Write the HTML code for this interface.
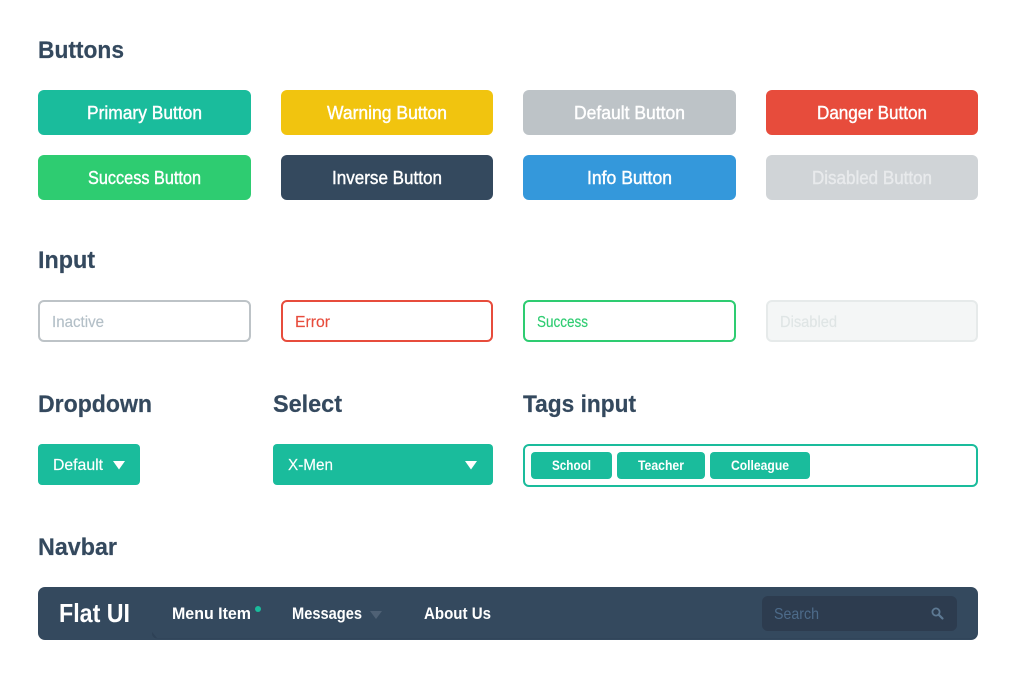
<!DOCTYPE html>
<html lang="en"><head><meta charset="utf-8"><title>Flat UI</title>
<style>
html,body{margin:0;padding:0;background:#fff;width:1017px;height:685px;overflow:hidden}
svg{display:block}
text{font-family:"Liberation Sans",sans-serif}
.h{font-size:24px;font-weight:700;fill:#34495e;stroke:#34495e;stroke-width:.2px}
.b{font-size:18px;fill:#fff;stroke:#fff;stroke-width:.4px}
.i{font-size:16px;stroke-width:.15px}
.t{font-size:14px;font-weight:700;fill:#fff}
.n{font-size:16.5px;font-weight:700;fill:#fff}
</style></head><body>
<svg width="1017" height="685" viewBox="0 0 1017 685" xmlns="http://www.w3.org/2000/svg">
<text class="h" x="38" y="58" textLength="86" lengthAdjust="spacingAndGlyphs">Buttons</text>
<rect x="38" y="90" width="213" height="45" rx="6" fill="#1abc9c"/>
<rect x="281" y="90" width="212" height="45" rx="6" fill="#f1c40f"/>
<rect x="523" y="90" width="213" height="45" rx="6" fill="#bdc3c7"/>
<rect x="766" y="90" width="212" height="45" rx="6" fill="#e74c3c"/>
<rect x="38" y="155" width="213" height="45" rx="6" fill="#2ecc71"/>
<rect x="281" y="155" width="212" height="45" rx="6" fill="#34495e"/>
<rect x="523" y="155" width="213" height="45" rx="6" fill="#3498db"/>
<rect x="766" y="155" width="212" height="45" rx="6" fill="#d0d4d7"/>
<text class="b" x="87" y="119" textLength="115" lengthAdjust="spacingAndGlyphs">Primary Button</text>
<text class="b" x="327" y="119" textLength="120" lengthAdjust="spacingAndGlyphs">Warning Button</text>
<text class="b" x="574" y="119" textLength="111" lengthAdjust="spacingAndGlyphs">Default Button</text>
<text class="b" x="817" y="119" textLength="110" lengthAdjust="spacingAndGlyphs">Danger Button</text>
<text class="b" x="88" y="184" textLength="113" lengthAdjust="spacingAndGlyphs">Success Button</text>
<text class="b" x="332" y="184" textLength="110" lengthAdjust="spacingAndGlyphs">Inverse Button</text>
<text class="b" x="587" y="184" textLength="85" lengthAdjust="spacingAndGlyphs">Info Button</text>
<text class="b" x="812" y="184" textLength="120" lengthAdjust="spacingAndGlyphs" style="fill:#e8eaec;stroke:#e8eaec">Disabled Button</text>

<text class="h" x="38" y="268" textLength="57" lengthAdjust="spacingAndGlyphs">Input</text>
<rect x="39" y="301" width="211" height="40" rx="5" fill="#fff" stroke="#bdc3c7" stroke-width="2"/>
<rect x="282" y="301" width="210" height="40" rx="5" fill="#fff" stroke="#e74c3c" stroke-width="2"/>
<rect x="524" y="301" width="211" height="40" rx="5" fill="#fff" stroke="#2ecc71" stroke-width="2"/>
<rect x="767" y="301" width="210" height="40" rx="5" fill="#f4f6f6" stroke="#e6eaea" stroke-width="2"/>
<text class="i" x="52" y="327" textLength="52" lengthAdjust="spacingAndGlyphs" fill="#b3bfc7" stroke="#b3bfc7">Inactive</text>
<text class="i" x="295" y="327" textLength="35" lengthAdjust="spacingAndGlyphs" fill="#e74c3c" stroke="#e74c3c">Error</text>
<text class="i" x="537" y="327" textLength="51" lengthAdjust="spacingAndGlyphs" fill="#2ecc71" stroke="#2ecc71">Success</text>
<text class="i" x="780" y="327" textLength="57" lengthAdjust="spacingAndGlyphs" fill="#dfe5e5" stroke="#dfe5e5">Disabled</text>

<text class="h" x="38" y="412" textLength="114" lengthAdjust="spacingAndGlyphs">Dropdown</text>
<text class="h" x="273" y="412" textLength="69" lengthAdjust="spacingAndGlyphs">Select</text>
<text class="h" x="523" y="412" textLength="113" lengthAdjust="spacingAndGlyphs">Tags input</text>
<rect x="38" y="444" width="102" height="41" rx="4" fill="#1abc9c"/>
<text class="i" x="53" y="470" textLength="50" lengthAdjust="spacingAndGlyphs" fill="#fff" stroke="#fff">Default</text>
<path d="M113 461h12l-6 8.500z" fill="#fff"/>
<rect x="273" y="444" width="220" height="41" rx="4" fill="#1abc9c"/>
<text class="i" x="288" y="470" textLength="45" lengthAdjust="spacingAndGlyphs" fill="#fff" stroke="#fff">X-Men</text>
<path d="M465 461h12l-6 8.500z" fill="#fff"/>
<rect x="524" y="445" width="453" height="41" rx="5" fill="#fff" stroke="#1abc9c" stroke-width="2"/>
<rect x="531" y="452" width="81" height="27" rx="4" fill="#1abc9c"/>
<rect x="617" y="452" width="88" height="27" rx="4" fill="#1abc9c"/>
<rect x="710" y="452" width="100" height="27" rx="4" fill="#1abc9c"/>
<text class="t" x="552" y="470" textLength="39" lengthAdjust="spacingAndGlyphs">School</text>
<text class="t" x="638" y="470" textLength="46" lengthAdjust="spacingAndGlyphs">Teacher</text>
<text class="t" x="731" y="470" textLength="58" lengthAdjust="spacingAndGlyphs">Colleague</text>

<text class="h" x="38" y="555" textLength="79" lengthAdjust="spacingAndGlyphs">Navbar</text>
<rect x="38" y="587" width="940" height="53" rx="7" fill="#34495e"/>
<path d="M152 632v2a5 5 0 0 0 5 4.500H971a7 7 0 0 0 7-6V633a7 7 0 0 1-7 5H157z" fill="#2e4156"/>
<text x="59" y="622" font-size="26" font-weight="700" fill="#fff" textLength="71" lengthAdjust="spacingAndGlyphs">Flat UI</text>
<text class="n" x="172" y="619" textLength="79" lengthAdjust="spacingAndGlyphs">Menu Item</text>
<circle cx="258" cy="609" r="3" fill="#1abc9c"/>
<text class="n" x="292" y="619" textLength="70" lengthAdjust="spacingAndGlyphs">Messages</text>
<path d="M370 611h12l-6 8z" fill="#4f6175"/>
<text class="n" x="424" y="619" textLength="67" lengthAdjust="spacingAndGlyphs">About Us</text>
<rect x="762" y="596" width="195" height="35" rx="6" fill="#2d3c4f"/>
<text x="774" y="619" font-size="16" fill="#4d6b8a" textLength="45" lengthAdjust="spacingAndGlyphs">Search</text>
<circle cx="936" cy="612" r="3.600" fill="none" stroke="#5d7993" stroke-width="1.800"/>
<path d="M938.800 614.800L942.500 618.500" stroke="#5d7993" stroke-width="2.200" stroke-linecap="round"/>
</svg>
</body></html>
